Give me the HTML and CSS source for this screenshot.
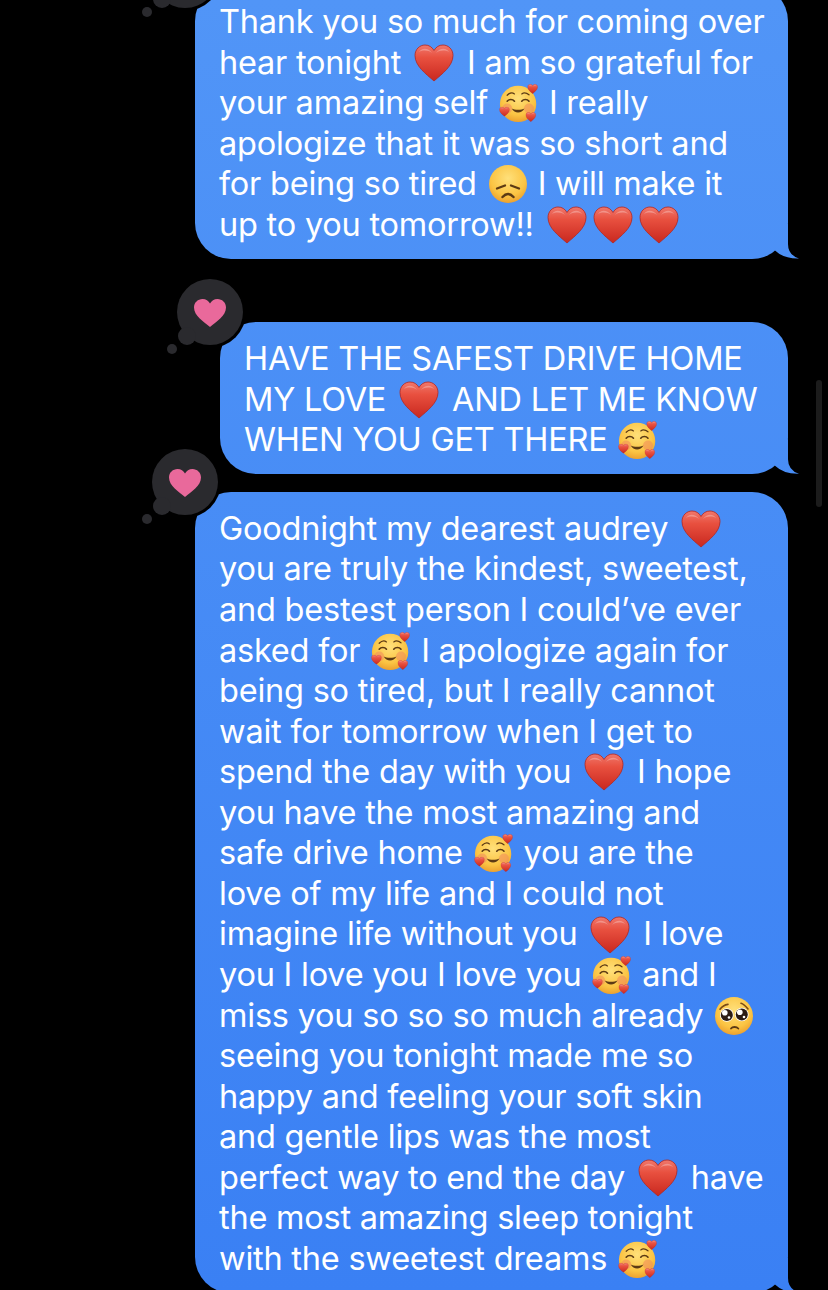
FILE: index.html
```html
<!DOCTYPE html>
<html lang="en">
<head>
<meta charset="utf-8">
<title>Messages</title>
<link rel="stylesheet" href="styles.css">
</head>
<body>
<svg class="defs" aria-hidden="true">
  <defs>
    <linearGradient id="gh" x1="0" y1="0" x2="0" y2="1"><stop offset="0" stop-color="#f0786c"/><stop offset=".35" stop-color="#e8503f"/><stop offset="1" stop-color="#c9281f"/></linearGradient>
    <radialGradient id="gf" cx=".5" cy=".35" r=".7"><stop offset="0" stop-color="#ffe07a"/><stop offset=".65" stop-color="#fbc443"/><stop offset="1" stop-color="#e9982a"/></radialGradient>
    <symbol id="heart" viewBox="0 0 40 38">
      <path d="M20 37C12 30 1 22 1 11.500C1 5 6 1 11 1C15 1 18 3 20 6.500C22 3 25 1 29 1C34 1 39 5 39 11.500C39 22 28 30 20 37Z" fill="url(#gh)" stroke="#b5241c" stroke-width=".8"/>
      <path d="M5 8C7 4 14 3 18 9C14 6 9 6 5 8ZM35 8C33 4 26 3 22 9C26 6 31 6 35 8Z" fill="#fff" opacity=".28"/>
    </symbol>
    <symbol id="sad" viewBox="0 0 40 40">
      <circle cx="20" cy="20" r="19" fill="url(#gf)"/>
      <path d="M9 24.500L17 21.500M31 24.500L23 21.500" stroke="#5c3a14" stroke-width="2.200" stroke-linecap="round" fill="none"/>
      <path d="M14.500 33Q20 27 25.500 33" stroke="#5c3a14" stroke-width="2.400" stroke-linecap="round" fill="none"/>
    </symbol>
    <symbol id="love" viewBox="0 0 44 44">
      <circle cx="21" cy="23" r="20" fill="url(#gf)"/>
      <circle cx="9" cy="28" r="5.500" fill="#f08a5d" opacity=".55"/><circle cx="33" cy="28" r="5.500" fill="#f08a5d" opacity=".55"/>
      <path d="M9 13.500C12 10.500 15 10.500 17 12M25 12C27 10.500 30 10.500 33 13" stroke="#5c3a14" stroke-width="1.300" fill="none" stroke-linecap="round"/>
      <path d="M9 20C11 17.500 15 17.500 17 20M25 20C27 17.500 31 17.500 33 20" stroke="#5c3a14" stroke-width="1.800" fill="none" stroke-linecap="round"/>
      <path d="M14 28C17 34 25 34 28 28C25 30 17 30 14 28Z" fill="#5c3a14"/>
      <use href="#heart" x="31" y="1" width="12" height="11"/>
      <use href="#heart" x="0" y="26" width="12" height="11"/>
      <use href="#heart" x="29" y="32" width="12" height="11"/>
    </symbol>
    <symbol id="plead" viewBox="0 0 40 40">
      <circle cx="20" cy="20" r="19" fill="url(#gf)"/>
      <path d="M6 13.200C8 10.500 11 8.800 14 8.400M34 13C32 10.500 30 8 27 7.300" stroke="#7a4a14" stroke-width="1.600" fill="none" stroke-linecap="round"/>
      <circle cx="12.800" cy="19" r="6.800" fill="#fff"/><circle cx="27.800" cy="18.500" r="6.800" fill="#fff"/>
      <circle cx="12.800" cy="19" r="6" fill="#2b1c14"/><circle cx="27.800" cy="18.500" r="6" fill="#2b1c14"/>
      <circle cx="10.800" cy="16.800" r="2.800" fill="#fff"/><circle cx="25.800" cy="16.300" r="2.800" fill="#fff"/>
      <circle cx="15" cy="21.500" r="1.300" fill="#fff"/><circle cx="30" cy="21" r="1.300" fill="#fff"/>
      <path d="M17 32.500C18.500 30.500 22.500 30.500 24.300 32.500" stroke="#5c3a14" stroke-width="1.800" fill="none" stroke-linecap="round"/>
    </symbol>
    <symbol id="tapback" viewBox="0 0 32 28">
      <path d="M16 28C10 23 0 17 0 8.500C0 3.500 4 0 8.500 0C12 0 14.500 2 16 4.500C17.500 2 20 0 23.500 0C28 0 32 3.500 32 8.500C32 17 22 23 16 28Z" fill="#e9699b"/>
    </symbol>
  </defs>
</svg>

<main class="thread">
  <div class="bubble first">
    <div class="reaction"><svg class="tapback"><use href="#tapback"/></svg></div>
    Thank you so much for coming over<br>
    hear tonight <svg class="emoji heart"><use href="#heart"/></svg> I am so grateful for<br>
    your amazing self <svg class="emoji"><use href="#love"/></svg> I really<br>
    apologize that it was so short and<br>
    for being so tired <svg class="emoji"><use href="#sad"/></svg> I will make it<br>
    up to you tomorrow!! <svg class="emoji heart"><use href="#heart"/></svg><svg class="emoji heart"><use href="#heart"/></svg><svg class="emoji heart"><use href="#heart"/></svg>
  </div>

  <div class="bubble second">
    <div class="reaction"><svg class="tapback"><use href="#tapback"/></svg></div>
    HAVE THE SAFEST DRIVE HOME<br>
    MY LOVE <svg class="emoji heart"><use href="#heart"/></svg> AND LET ME KNOW<br>
    WHEN YOU GET THERE <svg class="emoji"><use href="#love"/></svg>
  </div>

  <div class="bubble third">
    <div class="reaction"><svg class="tapback"><use href="#tapback"/></svg></div>
    Goodnight my dearest audrey <svg class="emoji heart"><use href="#heart"/></svg><br>
    you are truly the kindest, sweetest,<br>
    and bestest person I could’ve ever<br>
    asked for <svg class="emoji"><use href="#love"/></svg> I apologize again for<br>
    being so tired, but I really cannot<br>
    wait for tomorrow when I get to<br>
    spend the day with you <svg class="emoji heart"><use href="#heart"/></svg> I hope<br>
    you have the most amazing and<br>
    safe drive home <svg class="emoji"><use href="#love"/></svg> you are the<br>
    love of my life and I could not<br>
    imagine life without you <svg class="emoji heart"><use href="#heart"/></svg> I love<br>
    you I love you I love you <svg class="emoji"><use href="#love"/></svg> and I<br>
    miss you so so so much already <svg class="emoji"><use href="#plead"/></svg><br>
    seeing you tonight made me so<br>
    happy and feeling your soft skin<br>
    and gentle lips was the most<br>
    perfect way to end the day <svg class="emoji heart"><use href="#heart"/></svg> have<br>
    the most amazing sleep tonight<br>
    with the sweetest dreams <svg class="emoji"><use href="#love"/></svg>
  </div>
</main>
<div class="scrollbar"></div>
</body>
</html>
```
FILE: styles.css
```css
* { box-sizing: border-box; }
html, body { margin: 0; height: 100%; background: #000; }
body { overflow: hidden; position: relative; font-family: Inter, "Liberation Sans", sans-serif; }
.defs { position: absolute; width: 0; height: 0; }

.thread {
  display: flex;
  flex-direction: column;
  align-items: flex-end;
  padding-right: 40px;
  margin-top: -15px;
}

.bubble {
  position: relative;
  padding: 17px 24px 13.700px;
  border-radius: 36px;
  color: #fff;
  font-size: 32.5px;
  line-height: 40.55px;
  letter-spacing: -0.22px;
  white-space: nowrap;
  background: linear-gradient(#5195f7, #3a80f4) fixed;
}
.bubble::after {
  content: "";
  position: absolute;
  right: -11px;
  bottom: 0;
  width: 30px;
  height: 35px;
  background: linear-gradient(#5195f7, #3a80f4) fixed;
  clip-path: path("M19 0L19 20Q19 31 30 34.500Q15 35 6 26.500L0 0Z");
}
.first { width: 593px; margin-bottom: 63px; }
.second { width: 568px; margin-bottom: 17.650px; }
.third { width: 593px; }

.reaction {
  position: absolute;
  left: -43px;
  top: -43px;
  z-index: 2;
  width: 66px;
  height: 66px;
  border-radius: 50%;
  background: #2a2a2e;
  box-shadow: 0 0 0 3px #000;
  display: flex;
  align-items: center;
  justify-content: center;
}
.reaction::before {
  content: "";
  position: absolute;
  left: 1px;
  top: 48px;
  width: 18px;
  height: 18px;
  border-radius: 50%;
  background: #2a2a2e;
}
.reaction::after {
  content: "";
  position: absolute;
  left: -10px;
  top: 65px;
  width: 10px;
  height: 10px;
  border-radius: 50%;
  background: #2a2a2e;
}
.tapback { width: 32px; height: 28px; margin-top: 3px; }

.emoji {
  width: 40px;
  height: 40px;
  vertical-align: middle;
  margin: -5px 1px -1px 2px;
}
.heart { width: 40px; height: 38px; margin: -4px 4px 0; }
.heart + .heart { margin-left: 2px; }

.scrollbar {
  position: absolute;
  left: 816px;
  top: 380px;
  width: 6px;
  height: 127px;
  border-radius: 3px;
  background: #1c1c1c;
}
```
